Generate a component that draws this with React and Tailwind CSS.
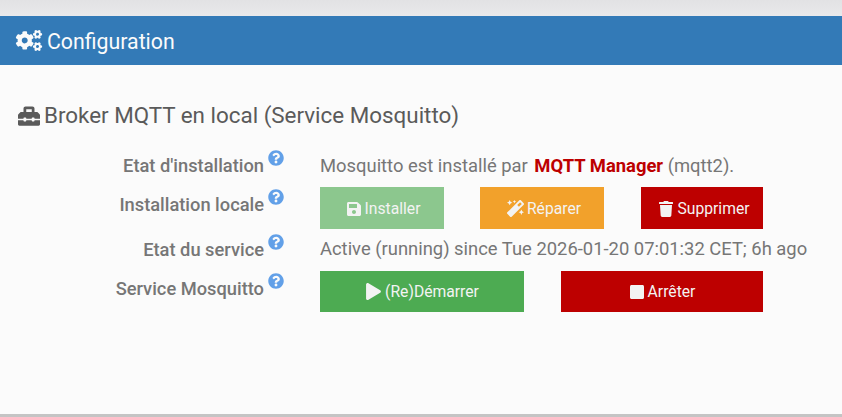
import React from 'react';
import { FaCogs, FaToolbox, FaQuestionCircle, FaSave, FaMagic, FaTrash, FaPlay, FaStop } from 'react-icons/fa';

const Label = ({ text }) => (
  <div className="w-[284px] flex justify-end items-start shrink-0">
    <span className="text-[18.3px] leading-[22px] font-medium text-[#767676] mt-[7px]">{text}</span>
    <FaQuestionCircle className="ml-[4px] mt-[2px] text-[16px] text-[#62a0e8]" />
  </div>
);

const Btn = ({ icon, text, className }) => (
  <button className={`flex items-center justify-center gap-[3px] text-[15.7px] text-[#f3f3f3] ${className}`}>
    {icon}
    <span>{text}</span>
  </button>
);

export default function App() {
  return (
    <div className="h-[417px] w-[842px] overflow-hidden flex flex-col bg-[#fbfbfb] font-['Roboto',sans-serif]">
      <div className="h-[16px] bg-gradient-to-b from-[#e2e2e4] to-[#e9e9eb]" />
      <div className="h-[49px] bg-[#337ab7] flex items-center pl-[15px] gap-[4px] text-[#fbfbfb]">
        <FaCogs className="text-[21px] w-[28px]" />
        <span className="text-[21.3px] leading-none pt-[2px]">Configuration</span>
      </div>

      <div className="flex-1 pt-[36px]">
        <div className="flex items-center pl-[18px] gap-[4px] text-[#5a5a5a] h-[28px]">
          <FaToolbox className="text-[22px] mt-[2px]" />
          <span className="text-[22.4px] leading-none">Broker MQTT en local (Service Mosquitto)</span>
        </div>

        <div className="mt-[19px] flex flex-col">
          <div className="flex h-[39px]">
            <Label text="Etat d'installation" />
            <div className="ml-[36px] text-[18.4px] text-[#767676] leading-[22px] mt-[7px] whitespace-nowrap">
              Mosquitto est installé par <span className="text-[#bd0000] font-bold ml-[2px]">MQTT Manager</span> (mqtt2).
            </div>
          </div>
          <div className="flex h-[45px]">
            <Label text="Installation locale" />
            <div className="ml-[36px] flex">
              <Btn className="w-[124px] h-[42px] pt-[1px] pl-[2px] bg-[#8cc78e]" icon={<FaSave className="text-[16px]" />} text="Installer" />
              <Btn className="w-[124px] h-[42px] pt-[1px] pl-[4px] ml-[36px] bg-[#f2a12b]" icon={<FaMagic className="text-[17px]" />} text="Réparer" />
              <Btn className="w-[122px] h-[42px] pt-[1px] pl-[4px] ml-[37px] bg-[#bd0000]" icon={<FaTrash className="text-[16px]" />} text="Supprimer" />
            </div>
          </div>
          <div className="flex h-[39px]">
            <Label text="Etat du service" />
            <div className="ml-[36px] text-[18.4px] text-[#767676] leading-[22px] mt-[6px] whitespace-nowrap">
              Active (running) since Tue 2026-01-20 07:01:32 CET; 6h ago
            </div>
          </div>
          <div className="flex h-[45px]">
            <Label text="Service Mosquitto" />
            <div className="ml-[36px] flex">
              <Btn className="w-[204px] h-[41px] bg-[#4dab52]" icon={<FaPlay className="text-[17px]" />} text="(Re)Démarrer" />
              <Btn className="w-[202px] h-[41px] ml-[37px] bg-[#bd0000]" icon={<FaStop className="text-[16px]" />} text="Arrêter" />
            </div>
          </div>
        </div>
      </div>

      <div className="h-[3px] bg-[#c4c4c4]" />
    </div>
  );
}
